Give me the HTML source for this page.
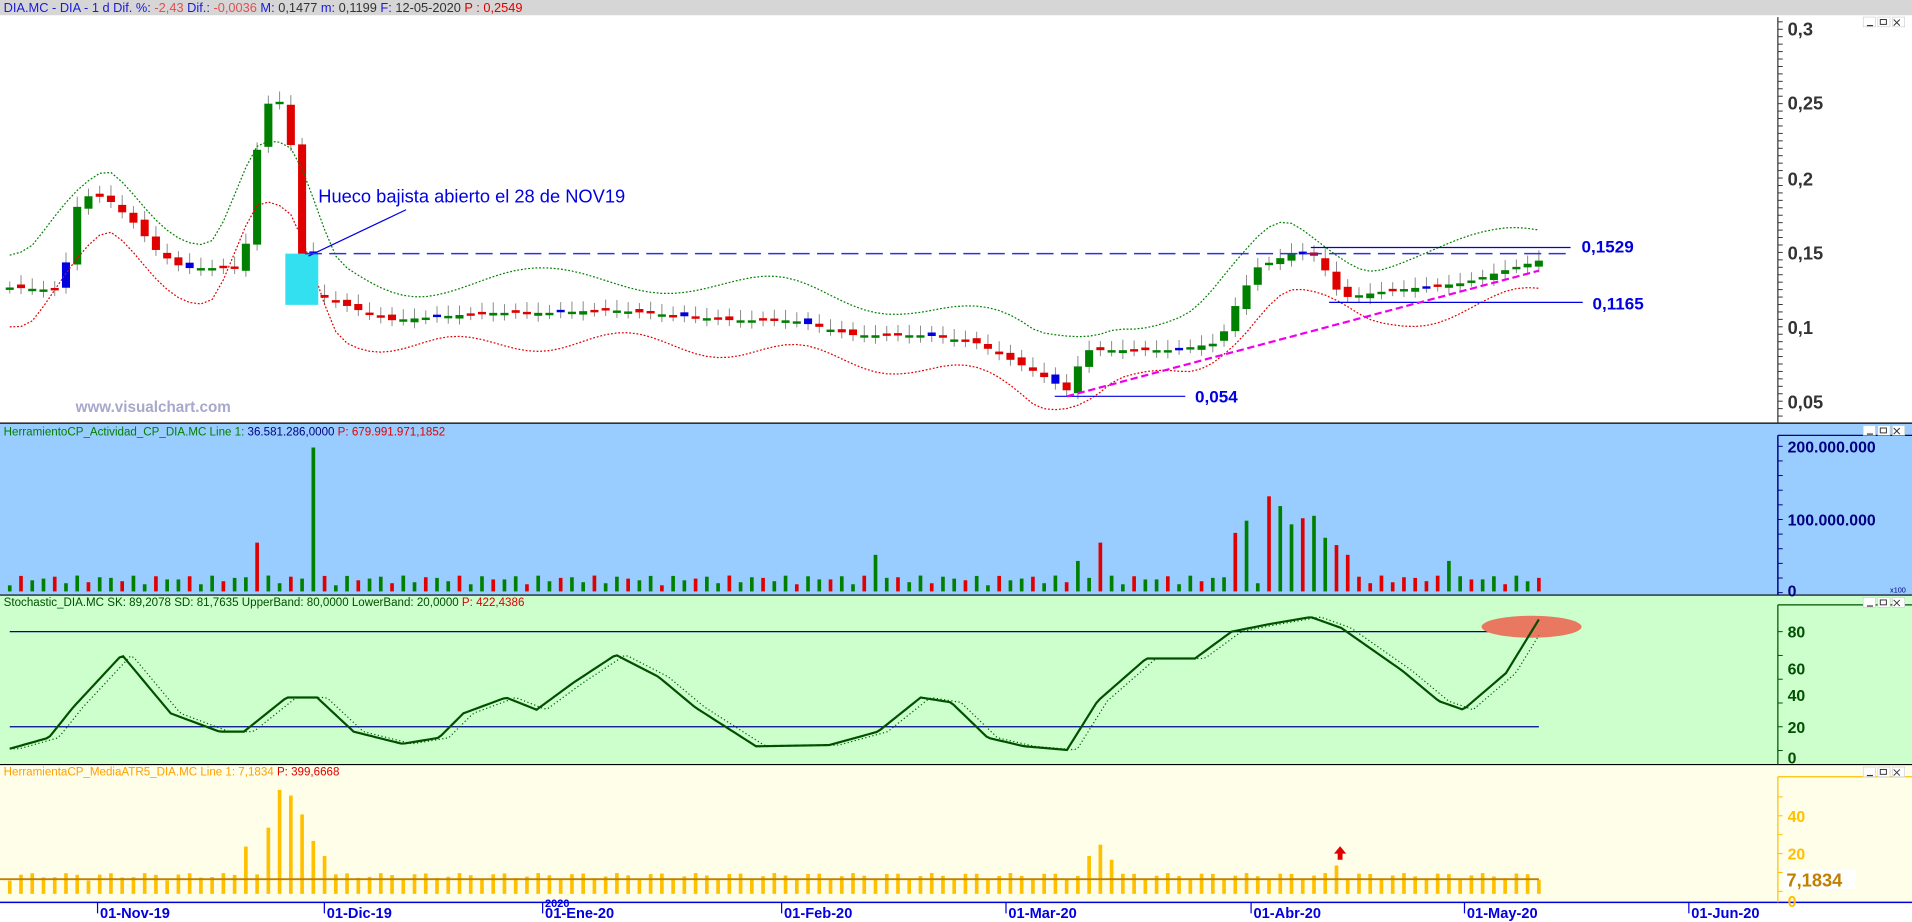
<!DOCTYPE html>
<html><head><meta charset="utf-8"><style>
html,body{margin:0;padding:0;background:#fff;overflow:hidden}
svg{display:block}
text{font-family:"Liberation Sans",sans-serif}
</style></head><body>
<svg id="s" width="1912" height="922" viewBox="0 0 1568 756.1" preserveAspectRatio="none" xmlns="http://www.w3.org/2000/svg">
<rect x="0" y="0" width="1568" height="756.1" fill="#fff"/>
<rect x="0" y="0" width="1568" height="12.5" fill="#d6d6d6"/>
<text y="10" font-size="10.5"><tspan x="3" fill="#1a1adc">DIA.MC - DIA -  1 d  Dif. %: </tspan><tspan fill="#e05050">-2,43 </tspan><tspan fill="#1a1adc"> Dif.: </tspan><tspan fill="#e05050">-0,0036 </tspan><tspan fill="#1a1adc"> M: </tspan><tspan fill="#333">0,1477 </tspan><tspan fill="#1a1adc"> m: </tspan><tspan fill="#333">0,1199 </tspan><tspan fill="#1a1adc"> F: </tspan><tspan fill="#333">12-05-2020 </tspan><tspan fill="#e00000"> P : 0,2549</tspan></text>
<!-- panels -->
<rect x="0" y="347" width="1568" height="141" fill="#99ccff"/>
<rect x="0" y="488" width="1568" height="139" fill="#ccffcc"/>
<rect x="0" y="627" width="1568" height="113" fill="#fffee8"/>
<line x1="0" y1="347" x2="1568" y2="347" stroke="#000" stroke-width="1"/>
<line x1="0" y1="488" x2="1568" y2="488" stroke="#000" stroke-width="1"/>
<line x1="0" y1="627" x2="1568" y2="627" stroke="#000" stroke-width="1"/>
<line x1="0" y1="740" x2="1568" y2="740" stroke="#0000e0" stroke-width="1.2"/>
<!-- axes -->
<line x1="1458" y1="14" x2="1458" y2="347" stroke="#333" stroke-width="1"/>
<line x1="1458" y1="357" x2="1458" y2="488" stroke="#000080" stroke-width="1.2"/>
<line x1="1458" y1="357" x2="1568" y2="357" stroke="#000080" stroke-width="1"/>
<line x1="1458" y1="496" x2="1458" y2="627" stroke="#005000" stroke-width="1"/>
<line x1="1458" y1="496" x2="1568" y2="496" stroke="#005000" stroke-width="1"/>
<line x1="1458" y1="637" x2="1458" y2="740" stroke="#ffc000" stroke-width="1"/>
<line x1="1458" y1="637" x2="1568" y2="637" stroke="#ffc000" stroke-width="1"/>
<g font-size="15" font-weight="bold" fill="#333">
<text x="1466" y="29">0,3</text><text x="1466" y="90">0,25</text><text x="1466" y="152">0,2</text><text x="1466" y="213">0,15</text><text x="1466" y="274">0,1</text><text x="1466" y="335">0,05</text></g>
<g font-size="13" font-weight="bold" fill="#000080">
<text x="1466" y="371">200.000.000</text><text x="1466" y="431">100.000.000</text><text x="1466" y="489">0</text></g>
<text x="1550" y="486" font-size="6" fill="#000080">x100</text>
<g font-size="13" font-weight="bold" fill="#005000">
<text x="1466" y="523">80</text><text x="1466" y="553">60</text><text x="1466" y="575">40</text><text x="1466" y="601">20</text><text x="1466" y="626">0</text></g>
<g font-size="13" font-weight="bold" fill="#ffc000">
<text x="1466" y="674">40</text><text x="1466" y="705">20</text><text x="1466" y="744">0</text></g>
<rect x="1462" y="713" width="60" height="16" fill="#fff"/>
<text x="1465" y="727" font-size="15" font-weight="bold" fill="#c08000">7,1834</text>
<g id="ticks"></g>
<!-- window controls -->
<g id="wc"></g>
<!-- titles -->
<text x="3" y="357" font-size="9.5" fill="#008000">HerramientoCP_Actividad_CP_DIA.MC  Line 1: <tspan fill="#000080">36.581.286,0000</tspan> <tspan fill="#e00000"> P: 679.991.971,1852</tspan></text>
<text x="3" y="497" font-size="9.5" fill="#005000">Stochastic_DIA.MC  SK: 89,2078  SD: 81,7635  UpperBand: 80,0000  LowerBand: 20,0000 <tspan fill="#e00000"> P: 422,4386</tspan></text>
<text x="3" y="636" font-size="9.5" fill="#ffa000">HerramientaCP_MediaATR5_DIA.MC  Line 1: 7,1834  <tspan fill="#e00000">P: 399,6668</tspan></text>
<text x="62" y="338" font-size="12.5" font-weight="bold" fill="#a8a8cc">www.visualchart.com</text>
<g id="main"></g>
<!-- annotations -->
<rect x="234" y="208" width="27" height="42" fill="#33e0f0"/>
<line x1="253" y1="210" x2="333" y2="172" stroke="#0000e0" stroke-width="1"/>
<text x="261" y="166" font-size="15" fill="#0000e0">Hueco bajista abierto el 28 de NOV19</text>
<line x1="250" y1="208" x2="1290" y2="208" stroke="#3030e0" stroke-width="1.2" stroke-dasharray="14,6"/>
<line x1="1075" y1="203" x2="1288" y2="203" stroke="#0000e0" stroke-width="1"/>
<text x="1297" y="207" font-size="14" font-weight="bold" fill="#0000e0">0,1529</text>
<line x1="1090" y1="248" x2="1298" y2="248" stroke="#0000e0" stroke-width="1"/>
<text x="1306" y="254" font-size="14" font-weight="bold" fill="#0000e0">0,1165</text>
<line x1="865" y1="325" x2="972" y2="325" stroke="#0000e0" stroke-width="1"/>
<text x="980" y="330" font-size="14" font-weight="bold" fill="#0000e0">0,054</text>
<line x1="875" y1="325" x2="1262" y2="222" stroke="#ee00ee" stroke-width="1.8" stroke-dasharray="6,3"/>
<g id="vol"></g>
<line x1="8" y1="518" x2="1262" y2="518" stroke="#000090" stroke-width="1"/>
<line x1="8" y1="596" x2="1262" y2="596" stroke="#000090" stroke-width="1"/>
<ellipse cx="1256" cy="514" rx="41" ry="9" fill="#e87860"/>
<g id="sto"></g>
<g id="atr"></g>
<path d="M1099 694 l-5 6 h3 v5 h4 v-5 h3 z" fill="#e00000"/>
<g id="dates" font-size="12" font-weight="bold" fill="#0000e0"></g>
</svg>
<script>
var NS="http://www.w3.org/2000/svg";
function el(p,t,a){var e=document.createElementNS(NS,t);for(var k in a)e.setAttribute(k,a[k]);document.getElementById(p).appendChild(e);return e;}
function interp(pts,x){if(x<=pts[0][0])return pts[0][1];for(var i=1;i<pts.length;i++){if(x<=pts[i][0]){var a=pts[i-1],b=pts[i];return a[1]+(b[1]-a[1])*(x-a[0])/(b[0]-a[0]);}}return pts[pts.length-1][1];}
function py(p){return 24+(0.3-p)*1224;}
var price=[[8,0.127],[50,0.125],[62,0.18],[75,0.19],[90,0.185],[110,0.17],[130,0.15],[150,0.14],[200,0.14],[205,0.19],[215,0.24],[225,0.26],[235,0.24],[243,0.2],[250,0.125],[260,0.122],[300,0.11],[320,0.105],[400,0.11],[450,0.11],[500,0.112],[600,0.105],[650,0.105],[700,0.095],[760,0.095],[800,0.09],[850,0.07],[875,0.058],[890,0.085],[960,0.085],[1000,0.09],[1010,0.11],[1030,0.14],[1060,0.15],[1080,0.148],[1100,0.12],[1140,0.125],[1200,0.13],[1240,0.14],[1262,0.145]];
var n=137,x0=8,dx=(1262-8)/136;
var up=[],lo=[];
for(var i=0;i<n;i++){var x=x0+i*dx;var c=interp(price,x),o=interp(price,x-dx)+0.002*Math.sin(i*1.7);
 var sm=0;for(var j=-3;j<=3;j++)sm+=interp(price,x+j*dx);sm/=7;
 up.push(x+","+py(sm+0.022+0.008*Math.sin(i*0.3)));lo.push(x+","+py(sm-0.02-0.006*Math.cos(i*0.4)));
 var hi=Math.max(o,c)+0.004+0.003*Math.abs(Math.sin(i*2.3)),lw=Math.min(o,c)-0.004;
 el("main","line",{x1:x,y1:py(hi),x2:x,y2:py(lw),stroke:"#888","stroke-width":0.8});
 var col=c>=o?"#008000":"#e00000";if(i%11==5)col="#0000e0";
 var t=py(Math.max(o,c)),h=Math.max(2,Math.abs(py(o)-py(c)));
 el("main","rect",{x:x-3.3,y:t,width:6.6,height:h,fill:col});
 var v=5+8*Math.abs(Math.sin(i*1.3));var vspk={22:40,27:118,77:30,95:25,97:40,109:48,110:58,112:78,113:70,114:55,115:60,116:62,117:44,118:38,119:30,128:25};
 if(vspk[i])v=vspk[i];
 el("vol","rect",{x:x-1.5,y:485-v,width:3,height:v,fill:(i>118&&i<127)||i%3==1?"#e00000":"#008000"});
 var a=7+4*Math.abs(Math.sin(i*0.9));var aspk={21:25,23:35,24:55,25:52,26:42,27:28,28:20,96:20,97:26,98:18,118:15};if(aspk[i])a=aspk[i];
 el("atr","rect",{x:x-1.5,y:733-a*1.55,width:3,height:a*1.55,fill:"#ffc000"});
}
el("main","polyline",{points:up.join(" "),fill:"none",stroke:"#008000","stroke-width":1,"stroke-dasharray":"1.5,1.5"});
el("main","polyline",{points:lo.join(" "),fill:"none",stroke:"#e00000","stroke-width":1,"stroke-dasharray":"1.5,1.5"});
el("atr","line",{x1:0,y1:721,x2:1262,y2:721,stroke:"#c08000","stroke-width":1.5});
var st=[[8,614],[40,605],[60,580],[100,537],[140,585],[180,600],[200,600],[235,572],[260,572],[290,600],[330,610],[360,605],[380,585],[415,572],[440,582],[470,560],[505,537],[540,555],[570,580],[620,612],[680,611],[720,600],[755,572],[780,576],[810,605],[840,612],[875,615],[900,575],[940,540],[980,540],[1010,518],[1040,512],[1075,506],[1100,515],[1150,550],[1180,575],[1200,582],[1235,552],[1262,508]];
var p1=[],p2=[];for(var x=8;x<=1262;x+=3){p1.push(x+","+interp(st,x));p2.push(x+","+interp(st,x-8));}
el("sto","polyline",{points:p2.join(" "),fill:"none",stroke:"#006000","stroke-width":1,"stroke-dasharray":"1,2"});
el("sto","polyline",{points:p1.join(" "),fill:"none",stroke:"#005000","stroke-width":1.8});
// ticks
[[24,85,6.1,"#333",14,347],[366,426,12,"#000080",360,488],[518,596,19.5,"#005000",500,627],[669,700,15.5,"#ffc000",640,740]].forEach(function(t){for(var y=t[0]-Math.floor((t[0]-t[4])/t[2])*t[2];y<t[5];y+=t[2])el("ticks","line",{x1:1458,y1:y,x2:1462,y2:y,stroke:t[3],"stroke-width":0.8});});
[14,349,490,629].forEach(function(y){for(var k=0;k<3;k++){var x=1528+k*12;el("wc","rect",{x:x,y:y,width:10,height:8,fill:"#fff",stroke:"#ccc","stroke-width":0.5});}
 el("wc","line",{x1:1531,y1:y+7,x2:1536,y2:y+7,stroke:"#333"});el("wc","rect",{x:1542,y:y+2,width:5,height:4,fill:"none",stroke:"#333","stroke-width":0.8});
 el("wc","path",{d:"M1553 "+(y+2)+" l5 5 M1558 "+(y+2)+" l-5 5",stroke:"#333","stroke-width":0.8});});
[[82,"01-Nov-19"],[268,"01-Dic-19"],[447,"01-Ene-20"],[643,"01-Feb-20"],[827,"01-Mar-20"],[1028,"01-Abr-20"],[1203,"01-May-20"],[1387,"01-Jun-20"]].forEach(function(d){
 el("dates","line",{x1:d[0]-2,y1:740,x2:d[0]-2,y2:749,stroke:"#0000e0"});var t=el("dates","text",{x:d[0],y:753});t.textContent=d[1];});
var t=el("dates","text",{x:447,y:744,"font-size":"9"});t.textContent="2020";
</script>
</body></html>
